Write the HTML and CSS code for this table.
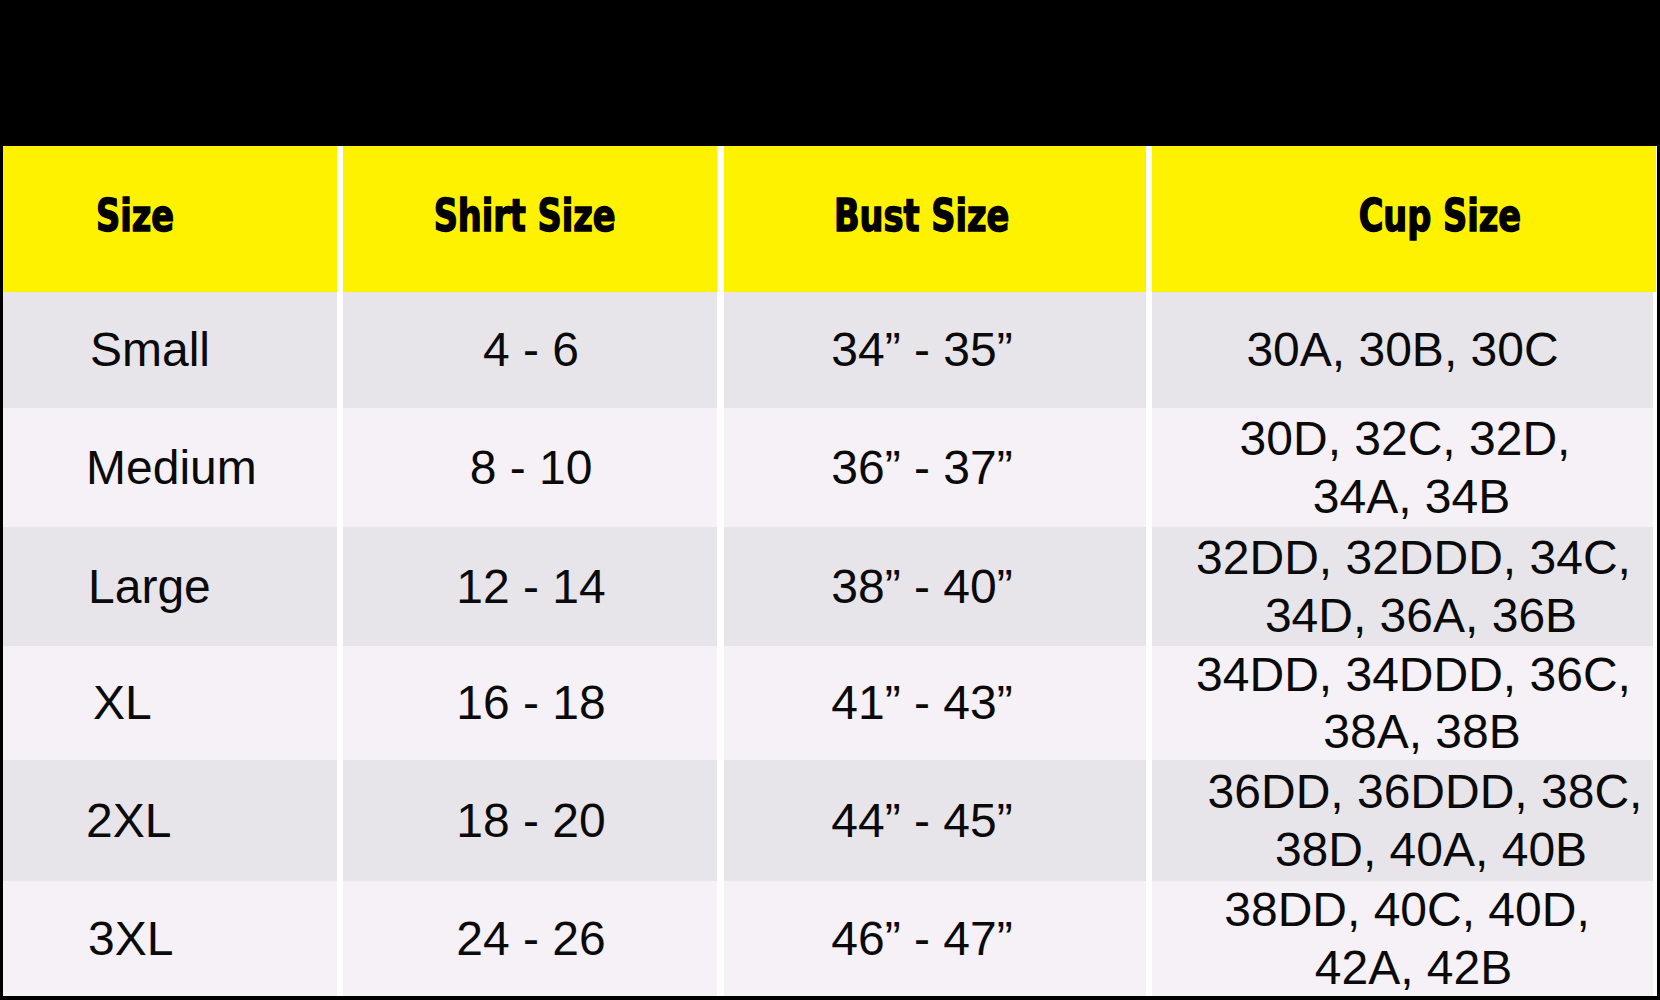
FILE: index.html
```html
<!DOCTYPE html>
<html lang="en">
<head>
<meta charset="utf-8">
<title>Size Chart</title>
<link rel="stylesheet" href="styles.css">
</head>
<body>
<div class="page">
  <div class="chart">
    <div class="row head">
      <div class="cell c1"><span class="h">Size</span></div>
      <div class="cell c2"><span class="h">Shirt Size</span></div>
      <div class="cell c3"><span class="h">Bust Size</span></div>
      <div class="cell c4"><span class="h">Cup Size</span></div>
    </div>
    <div class="row odd">
      <div class="cell c1 i4">Small</div>
      <div class="cell c2">4 - 6</div>
      <div class="cell c3">34” - 35”</div>
      <div class="cell c4"><span class="ln pr22">30A, 30B, 30C</span></div>
    </div>
    <div class="row even">
      <div class="cell c1 i0">Medium</div>
      <div class="cell c2">8 - 10</div>
      <div class="cell c3">36” - 37”</div>
      <div class="cell c4"><span class="ln pr17">30D, 32C, 32D,</span><span class="ln pr4">34A, 34B</span></div>
    </div>
    <div class="row odd">
      <div class="cell c1 i1">Large</div>
      <div class="cell c2">12 - 14</div>
      <div class="cell c3">38” - 40”</div>
      <div class="cell c4"><span class="ln">32DD, 32DDD, 34C,</span><span class="ln pl15">34D, 36A, 36B</span></div>
    </div>
    <div class="row even">
      <div class="cell c1 i6">XL</div>
      <div class="cell c2">16 - 18</div>
      <div class="cell c3">41” - 43”</div>
      <div class="cell c4"><span class="ln">34DD, 34DDD, 36C,</span><span class="ln pl17">38A, 38B</span></div>
    </div>
    <div class="row odd">
      <div class="cell c1 i0">2XL</div>
      <div class="cell c2">18 - 20</div>
      <div class="cell c3">44” - 45”</div>
      <div class="cell c4"><span class="ln pl23">36DD, 36DDD, 38C,</span><span class="ln pl35">38D, 40A, 40B</span></div>
    </div>
    <div class="row even">
      <div class="cell c1 i1">3XL</div>
      <div class="cell c2">24 - 26</div>
      <div class="cell c3">46” - 47”</div>
      <div class="cell c4"><span class="ln pr13">38DD, 40C, 40D,</span><span class="ln">42A, 42B</span></div>
    </div>
  </div>
</div>
</body>
</html>
```
FILE: styles.css
```css
html, body {
  margin: 0;
  padding: 0;
  background: #000;
}

.page {
  width: 1660px;
  height: 1000px;
  box-sizing: border-box;
  padding: 146px 3px 4px 3px;
  overflow: hidden;
}

.chart {
  display: grid;
  grid-template-columns: 334px 374px 423px 504px;
  grid-template-rows: 146px 116px 119px 119px 114px 121px 115px;
  column-gap: 6px;
  background: #ffffff;
  font-family: "Liberation Sans", Arial, sans-serif;
  font-size: 48px;
  color: #0a0a0a;
  overflow: hidden;
}

.row {
  display: contents;
}

.cell {
  display: flex;
  flex-direction: column;
  align-items: center;
  justify-content: center;
  text-align: center;
  line-height: 1.19;
  white-space: nowrap;
  box-sizing: border-box;
}

.c1 {
  align-items: flex-start;
  padding-left: 84px;
}

.c1.i0 { padding-left: 83px; }
.c1.i1 { padding-left: 85px; }
.c1.i4 { padding-left: 87px; }
.c1.i6 { padding-left: 90px; }

.c2 {
  padding-left: 2px;
}

.c3 {
  margin-left: 1px;
  padding-right: 26px;
}

.c4 {
  padding-left: 22px;
}

.row:not(.head) .c4 {
  margin-right: 3px;
}

.ln {
  display: block;
}

.pr22 { padding-right: 22px; }
.pr17 { padding-right: 17px; }
.pr13 { padding-right: 13px; }
.pr4 { padding-right: 4px; }
.pl15 { padding-left: 15px; }
.pl17 { padding-left: 17px; }
.pl23 { padding-left: 23px; }
.pl35 { padding-left: 35px; }

.head .cell {
  background: #fff200;
  padding-bottom: 7px;
}

.head .c1 {
  padding-left: 93px;
}

.head .c2 {
  padding-left: 0;
  padding-right: 10px;
}

.head .c4 {
  padding-left: 72px;
}

.h {
  font-family: "DejaVu Sans Condensed", "DejaVu Sans", sans-serif;
  font-weight: 700;
  font-size: 45px;
  color: #000;
  display: inline-block;
  -webkit-text-stroke: 1.4px #000;
  transform: scaleX(0.83);
  transform-origin: center;
}

.head .c1 .h {
  transform-origin: left center;
}

.odd .cell {
  background: #e8e5ea;
}

.even .cell {
  background: #f6f1f6;
}
```
